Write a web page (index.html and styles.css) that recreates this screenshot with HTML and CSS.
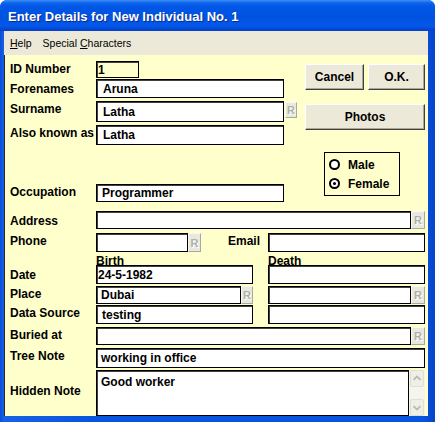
FILE: index.html
```html
<!DOCTYPE html>
<html>
<head>
<meta charset="utf-8">
<link rel="stylesheet" href="styles.css">
</head>
<body>
<div class="window">
  <div class="titlebar"><span class="title">Enter Details for New Individual No. 1</span></div>
  <div class="frame">
    <div class="menubar">
      <span class="menu menu-help"><u>H</u>elp</span>
      <span class="menu menu-special">Special <u>C</u>haracters</span>
    </div>
    <div class="content">
      <div class="top">
        <div class="top-left">
          <div class="row r-id"><span class="lbl">ID Number</span><div class="field id-field pad-tight">1</div></div>
          <div class="row r-fore"><span class="lbl lbl-down">Forenames</span><div class="field w188 pad-wide">Aruna</div></div>
          <div class="row r-sur"><span class="lbl">Surname</span><div class="field w188 pad-wide">Latha</div><span class="rbtn rbtn-short">R</span></div>
          <div class="row r-also"><span class="lbl">Also known as</span><div class="field w188 pad-wide">Latha</div></div>
          <div class="row r-occ"><span class="lbl">Occupation</span><div class="field w188 pad-mid">Programmer</div></div>
        </div>
        <div class="top-right">
          <div class="btnrow"><button class="btn btn-cancel">Cancel</button><button class="btn btn-ok">O.K.</button></div>
          <button class="btn btn-photos">Photos</button>
          <div class="sexbox">
            <div class="radio"><span class="circle"></span>Male</div>
            <div class="radio"><span class="circle on"></span>Female</div>
          </div>
        </div>
      </div>
      <div class="row r-addr"><span class="lbl lbl-down">Address</span><div class="field w315"></div><span class="rbtn w14">R</span></div>
      <div class="row r-phone"><span class="lbl">Phone</span><div class="field w92"></div><span class="rbtn w13">R</span><span class="email-lbl">Email</span><div class="field w157"></div></div>
      <div class="row r-bd"><span class="lbl"></span><span class="col-lbl">Birth</span><span class="col-lbl">Death</span></div>
      <div class="row r-date"><span class="lbl lbl-down">Date</span><div class="field w157 pad-tight">24-5-1982</div><div class="field w157 gap15"></div></div>
      <div class="row r-place"><span class="lbl">Place</span><div class="field w145">Dubai</div><span class="rbtn w12">R</span><div class="field w143 gap15"></div><span class="rbtn w14">R</span></div>
      <div class="row r-ds"><span class="lbl">Data Source</span><div class="field w157 pad-mid">testing</div><div class="field w157 gap15"></div></div>
      <div class="row r-buried"><span class="lbl">Buried at</span><div class="field w315"></div><span class="rbtn w14">R</span></div>
      <div class="row r-tree"><span class="lbl">Tree Note</span><div class="field w329">working in office</div></div>
      <div class="row r-hidden"><span class="lbl lbl-hidden">Hidden Note</span><div class="field memo w313">Good worker</div>
        <div class="vscroll">
          <span class="sbtn"><svg width="14" height="15" viewBox="0 0 14 15"><polyline points="3,9 7,5 11,9" fill="none" stroke="#b8b8ac" stroke-width="2"/></svg></span>
          <span class="strack"></span>
          <span class="sbtn"><svg width="14" height="15" viewBox="0 0 14 15"><polyline points="3,6 7,10 11,6" fill="none" stroke="#b8b8ac" stroke-width="2"/></svg></span>
        </div>
      </div>
    </div>
  </div>
</div>
</body>
</html>
```
FILE: styles.css
```css
html, body {
  margin: 0;
  padding: 0;
  background: #ffffff;
}
body {
  font-family: "Liberation Sans", Arial, sans-serif;
}
.window {
  width: 435px;
  height: 422px;
  background: linear-gradient(to right, #0a4fd8 0, #1761e6 4px, #0a55df 20%, #0a55df 97%, #0545c9 100%);
  border-radius: 7px 7px 0 0;
  overflow: hidden;
  display: flex;
  flex-direction: column;
}
.titlebar {
  height: 31px;
  flex: none;
  box-sizing: border-box;
  padding: 2px 0 0 8px;
  background: linear-gradient(to bottom, #3d8ff7 0px, #0e63ea 3px, #0056e6 7px, #0052df 18px, #0458ea 26px, #0148d6 29px, #0a3fc0 31px);
  color: #ffffff;
  font-size: 13px;
  font-weight: bold;
  line-height: 29px;
  text-shadow: 1px 1px 0 #0b2a8c;
  white-space: nowrap;
}
.frame {
  flex: 1;
  display: flex;
  flex-direction: column;
  margin: 0 7px 6px 4px;
}
.menubar {
  height: 24px;
  flex: none;
  box-sizing: border-box;
  padding: 1px 0 0 6px;
  background: #ece9d8;
  font-size: 10.5px;
  line-height: 23px;
  color: #000;
  display: flex;
}
.menu-special {
  margin-left: 11px;
}
.content {
  flex: 1;
  background: #ffffcc;
  border-left: 1px solid #2a2a2a;
  padding-left: 5px;
  font-size: 12px;
  font-weight: bold;
  color: #000;
}
.top {
  display: flex;
  height: 147px;
}
.top-left {
  width: 295px;
  flex: none;
}
.top-right {
  width: 120px;
  flex: none;
  display: flex;
  flex-direction: column;
}
.row {
  display: flex;
  align-items: stretch;
}
.lbl {
  width: 86px;
  flex: none;
  line-height: 14px;
  margin-top: 1px;
  white-space: nowrap;
  align-self: flex-start;
}
.lbl-down {
  margin-top: 3px;
}
.lbl-hidden {
  margin-top: 14px;
}
.field {
  box-sizing: border-box;
  flex: none;
  border: 1px solid #000;
  box-shadow: inset 1px 1px 0 #404040;
  background: #ffffff;
  display: flex;
  align-items: center;
  padding-left: 4px;
  white-space: nowrap;
  overflow: hidden;
}
.pad-wide { padding-left: 6px; }
.pad-mid { padding-left: 5px; }
.pad-tight { padding-left: 1px; }
.id-field {
  width: 43px;
  background: transparent;
}
.w92 { width: 92px; }
.w143 { width: 143px; }
.w145 { width: 145px; }
.w157 { width: 157px; }
.w188 { width: 188px; }
.w313 { width: 313px; }
.w315 { width: 315px; }
.w329 { width: 329px; }
.gap15 { margin-left: 15px; }

.r-id { margin-top: 6px; height: 17px; }
.r-fore { margin-top: 1px; height: 19px; }
.r-sur { margin-top: 3px; height: 21px; }
.r-also { margin-top: 3px; height: 20px; }
.r-occ { margin-top: 39px; height: 18px; }
.r-addr { margin-top: 9px; height: 18px; }
.r-phone { margin-top: 4px; height: 19px; }
.r-bd { margin-top: 2px; height: 11px; line-height: 14px; }
.r-date { margin-top: 0; height: 19px; }
.r-place { margin-top: 2px; height: 18px; }
.r-ds { margin-top: 1px; height: 19px; }
.r-buried { margin-top: 3px; height: 18px; }
.r-tree { margin-top: 3px; height: 20px; }
.r-hidden { margin-top: 2px; height: 46px; }

.col-lbl {
  width: 172px;
  flex: none;
}
.email-lbl {
  width: 40px;
  flex: none;
  margin-left: 27px;
  margin-top: 1px;
  line-height: 14px;
  align-self: flex-start;
}
.rbtn {
  box-sizing: border-box;
  flex: none;
  background: #e9e8e0;
  border: 1px solid;
  border-color: #f8f8f4 #a8a89c #a8a89c #f8f8f4;
  color: #b0b0a4;
  font-size: 11px;
  font-weight: bold;
  text-shadow: 1px 1px 0 #ffffff;
  display: flex;
  align-items: center;
  justify-content: center;
}
.rbtn-short {
  width: 12px;
  height: 16px;
  margin-left: 1px;
  align-self: flex-start;
  margin-top: 1px;
}
.w12 { width: 12px; }
.w13 { width: 13px; }
.w14 { width: 14px; }

.btnrow {
  display: flex;
  gap: 4px;
  margin-top: 9px;
  height: 26px;
}
.btn {
  box-sizing: border-box;
  font-family: "Liberation Sans", Arial, sans-serif;
  font-size: 12px;
  font-weight: bold;
  color: #000;
  background: #ece9d8;
  border: 1px solid;
  border-color: #ffffff #404040 #404040 #ffffff;
  box-shadow: inset -1px -1px 0 #aca899;
  padding: 0;
  margin: 0;
  height: 26px;
}
.btn-cancel { width: 59px; }
.btn-ok { width: 57px; }
.btn-photos {
  width: 120px;
  margin-top: 14px;
}
.sexbox {
  box-sizing: border-box;
  width: 76px;
  height: 44px;
  margin-top: 22px;
  margin-left: 19px;
  border: 1px solid #000;
  padding: 2px 0 0 4px;
}
.radio {
  display: flex;
  align-items: center;
  height: 19px;
}
.circle {
  box-sizing: border-box;
  width: 11px;
  height: 11px;
  border: 2px solid #000;
  border-radius: 50%;
  background: #ffffff;
  margin-right: 8px;
  display: flex;
  align-items: center;
  justify-content: center;
}
.circle.on::after {
  content: "";
  width: 3px;
  height: 3px;
  background: #000;
  border-radius: 50%;
}
.memo {
  align-items: flex-start;
  padding-top: 4px;
}
.vscroll {
  width: 16px;
  flex: none;
  display: flex;
  flex-direction: column;
  background: #f5f4ee;
}
.sbtn {
  box-sizing: border-box;
  height: 17px;
  margin: 0 1px;
  background: #efeee7;
  border: 1px solid #e0dfd4;
  border-radius: 2px;
  display: flex;
  align-items: center;
  justify-content: center;
}
.strack {
  flex: 1;
}
```
